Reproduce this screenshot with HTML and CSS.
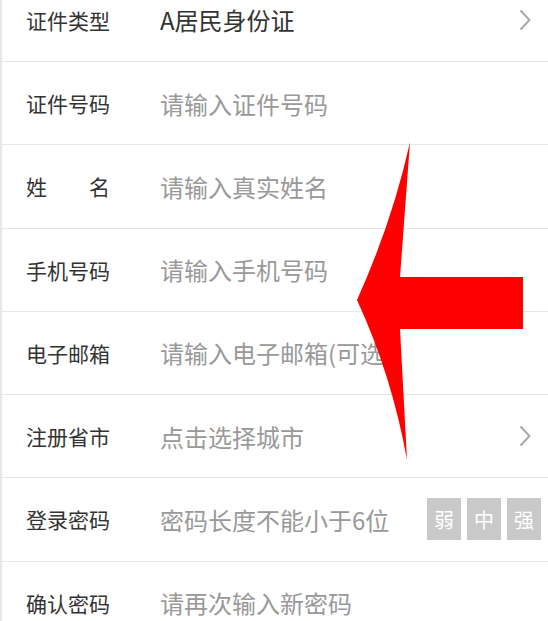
FILE: index.html
```html
<!DOCTYPE html>
<html lang="zh-CN">
<head>
<meta charset="utf-8">
<title>注册</title>
<link rel="stylesheet" href="styles.css">
</head>
<body>
<div class="form">
  <div class="row">
    <div class="label">证件类型</div>
    <div class="value">A居民身份证</div>
    <svg class="chev" viewBox="0 0 12 22" width="12" height="22"><path d="M1.5 1.5 L10.5 11 L1.5 20.5" fill="none" stroke="#a8a8a8" stroke-width="2"/></svg>
  </div>
  <div class="row">
    <div class="label">证件号码</div>
    <div class="value ph">请输入证件号码</div>
  </div>
  <div class="row">
    <div class="label split"><span>姓</span><span>名</span></div>
    <div class="value ph">请输入真实姓名</div>
  </div>
  <div class="row">
    <div class="label">手机号码</div>
    <div class="value ph">请输入手机号码</div>
  </div>
  <div class="row">
    <div class="label">电子邮箱</div>
    <div class="value ph">请输入电子邮箱(可选)</div>
  </div>
  <div class="row">
    <div class="label">注册省市</div>
    <div class="value ph">点击选择城市</div>
    <svg class="chev" viewBox="0 0 12 22" width="12" height="22"><path d="M1.5 1.5 L10.5 11 L1.5 20.5" fill="none" stroke="#a8a8a8" stroke-width="2"/></svg>
  </div>
  <div class="row">
    <div class="label">登录密码</div>
    <div class="value ph">密码长度不能小于6位</div>
    <div class="strength">
      <span class="lvl">弱</span><span class="lvl">中</span><span class="lvl">强</span>
    </div>
  </div>
  <div class="row">
    <div class="label">确认密码</div>
    <div class="value ph">请再次输入新密码</div>
  </div>
</div>
<svg class="arrow" viewBox="0 0 548 621" width="548" height="621">
  <path d="M410 142 Q392.5 221 357 300 Q392 376 407 460 L400 329 L523 329 L523 277 L400 277 Z" fill="#fe0000"/>
</svg>
</body>
</html>
```

FILE: styles.css
```css
html, body {
  margin: 0;
  padding: 0;
  background: #ffffff;
  overflow: hidden;
}
body {
  width: 548px;
  height: 621px;
  position: relative;
  font-family: "Noto Sans CJK SC", "Noto Sans", sans-serif;
}
.form {
  margin-top: -21.25px;
  border-left: 2px solid #e8e8e8;
}
.row {
  box-sizing: border-box;
  height: 83.25px;
  border-bottom: 1.5px solid #e6e6e6;
  display: flex;
  align-items: center;
  padding-left: 24px;
  padding-right: 7px;
}
.label {
  width: 84px;
  font-size: 21px;
  color: #333333;
  white-space: nowrap;
  flex: none;
}
.label.split {
  display: flex;
  justify-content: space-between;
}
.value {
  margin-left: 50px;
  font-size: 24px;
  color: #333333;
  white-space: nowrap;
  flex: 1;
}
.value.ph {
  color: #999999;
}
.chev {
  flex: none;
  margin-right: 10px;
}
.strength {
  display: flex;
  gap: 6px;
  flex: none;
}
.lvl {
  width: 34px;
  height: 42px;
  background: #c9c9c9;
  color: #ffffff;
  font-size: 20px;
  display: flex;
  align-items: center;
  justify-content: center;
}
.arrow {
  position: absolute;
  left: 0;
  top: 0;
  pointer-events: none;
}
```
